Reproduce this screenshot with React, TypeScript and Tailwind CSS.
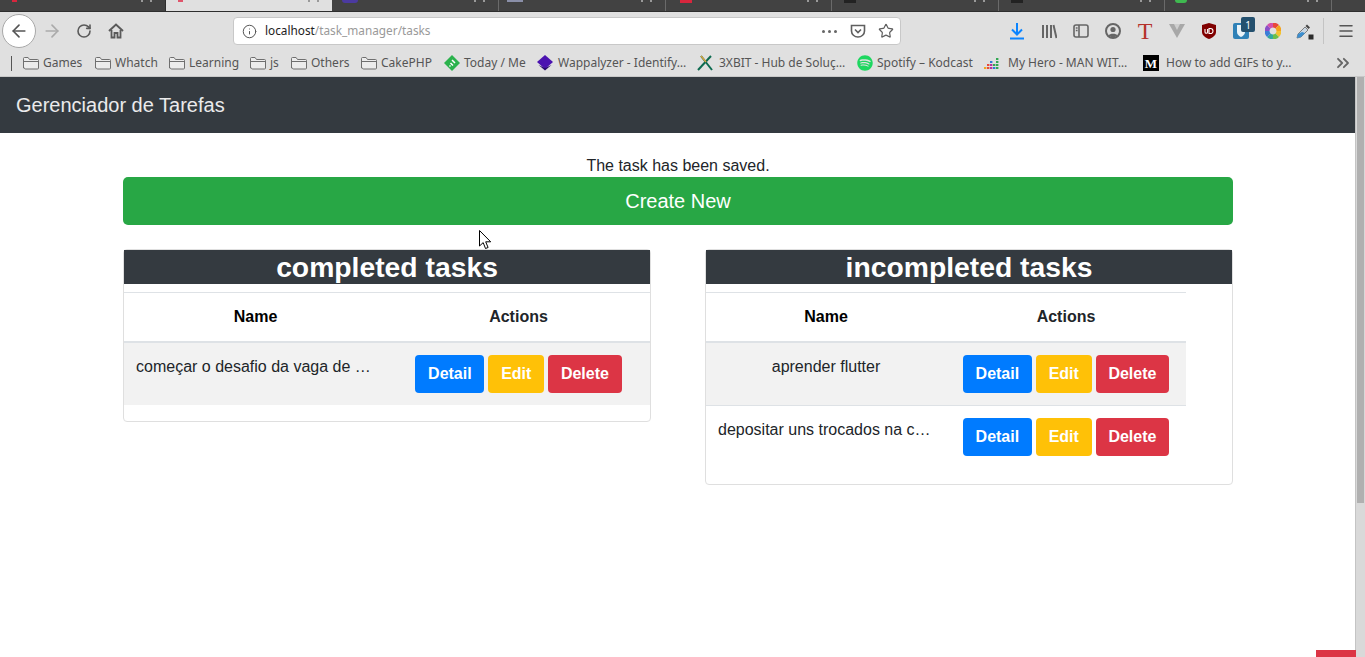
import { ArrowLeft, ArrowRight, ChevronsRight, Info, Menu, RotateCw, Star } from 'lucide-react'
import { FaSpotify } from 'react-icons/fa'

type Task = { name: string; center?: boolean }

function FolderIcon() {
  return (
    <svg width="16" height="16" viewBox="0 0 16 16" fill="none" stroke="#6f6f6f" strokeWidth="1">
      <path d="M.5 13V3.500a1 1 0 0 1 1-1h3.600l1.400 2h8a1 1 0 0 1 1 1V13a1 1 0 0 1-1 1h-12a1 1 0 0 1-1-1z" fill="#ececec" />
      <path d="M.5 6.500h15" />
    </svg>
  )
}

function HomeIcon() {
  return (
    <svg width="16" height="16" viewBox="0 0 16 16" fill="none" stroke="#5a5a5a" strokeWidth="2">
      <path d="M1 8l7-6.500L15 8" />
      <path d="M3.500 7v7.500h3V10h3v4.500h3V7" strokeWidth="1.800" />
    </svg>
  )
}

function Feedly() {
  return (
    <svg width="16" height="16" viewBox="0 0 16 16">
      <path d="M8 0l8 8-8 8-8-8z" fill="#2bb24c" />
      <path d="M8 5l3 3M6.500 8l2.500 2.500M5.500 10.500l1 1" stroke="#fff" strokeWidth="1.500" />
    </svg>
  )
}

function Wappalyzer() {
  return (
    <svg width="16" height="16" viewBox="0 0 16 16">
      <path d="M8 0l8 7-8 7-8-7z" fill="#4b13b0" />
      <path d="M1.500 10L8 15.500l6.500-5.500L8 13z" fill="#2a0a70" />
    </svg>
  )
}

function Xbit() {
  return (
    <svg width="16" height="16" viewBox="0 0 16 16" fill="none" strokeWidth="2">
      <path d="M1 15L14 1" stroke="#0d6b50" />
      <path d="M4 1l11 14" stroke="#0d6b50" />
      <path d="M4 1l5 6" stroke="#d9a441" strokeWidth="1.500" />
    </svg>
  )
}

function Deezer() {
  const bars = [
    [0, 12, '#f4a21c'], [3, 12, '#e8483a'], [3, 9, '#e8483a'], [6, 12, '#b7339b'], [6, 9, '#b7339b'], [6, 6, '#2d7dd2'],
    [9, 12, '#2d7dd2'], [9, 9, '#32a852'], [12, 12, '#32a852'], [12, 9, '#32a852'], [12, 6, '#32a852'], [12, 3, '#32a852'],
  ] as const
  return (
    <svg width="16" height="16" viewBox="0 0 16 16">
      {bars.map(([x, y, c], i) => (
        <rect key={i} x={x + 1} y={y} width="2.400" height="2" fill={c} />
      ))}
    </svg>
  )
}

function Medium() {
  return (
    <span className="flex h-4 w-4 items-center justify-center bg-black font-['Liberation_Serif',serif] text-[13px] font-bold leading-none text-white">
      M
    </span>
  )
}

const bookmarks = [
  { label: 'Games', icon: <FolderIcon />, w: 'w-[72px] gap-1' },
  { label: 'Whatch', icon: <FolderIcon />, w: 'w-[74px] gap-1' },
  { label: 'Learning', icon: <FolderIcon />, w: 'w-[81px] gap-1' },
  { label: 'js', icon: <FolderIcon />, w: 'w-[41px] gap-1' },
  { label: 'Others', icon: <FolderIcon />, w: 'w-[70px] gap-1' },
  { label: 'CakePHP', icon: <FolderIcon />, w: 'w-[83px] gap-1' },
  { label: 'Today / Me', icon: <Feedly />, w: 'w-[93px] gap-1' },
  { label: 'Wappalyzer - Identify…', icon: <Wappalyzer />, w: 'w-[160px] gap-[5px]' },
  { label: '3XBIT - Hub de Soluç…', icon: <Xbit />, w: 'w-[160px] gap-[6px]' },
  { label: 'Spotify – Kodcast', icon: <FaSpotify className="h-4 w-4 text-[#1ed760]" />, w: 'w-[126px] gap-1' },
  { label: 'My Hero - MAN WIT…', icon: <Deezer />, w: 'w-[160px] gap-[9px]' },
  { label: 'How to add GIFs to y…', icon: <Medium />, w: 'w-[190px] gap-[7px]' },
]

const tabs = [
  { w: 'w-[166px] border-r border-[#2e2e2e]', pad: 'pl-3', mark: 'h-[2px] w-[5px] bg-[#d7263d]' },
  { w: 'w-[166px] bg-[#e0e0e0]', pad: 'pl-3', mark: 'h-[2px] w-[5px] bg-[#e0556b]' },
  { w: 'w-[167px] border-r border-[#6a6a6a]', pad: 'pl-[10px]', mark: 'h-[3px] w-4 rounded-b-full bg-[#4b3aa0]' },
  { w: 'w-[167px] border-r border-[#6a6a6a]', pad: 'pl-2', mark: 'h-[2px] w-4 bg-[#8a8fa8]' },
  { w: 'w-[166px] border-r border-[#6a6a6a]', pad: 'pl-[14px]', mark: 'h-[3px] w-3 bg-[#d7263d]' },
  { w: 'w-[167px] border-r border-[#6a6a6a]', pad: 'pl-3', mark: 'h-[3px] w-3 bg-[#222]' },
  { w: 'w-[166px] border-r border-[#6a6a6a]', pad: 'pl-3', mark: 'h-[3px] w-3 bg-[#222]' },
  { w: 'w-[167px] border-r border-[#6a6a6a]', pad: 'pl-[10px]', mark: 'h-[3px] w-3 rounded-b-full bg-[#3fb950]' },
]

function TabStrip() {
  return (
    <div className="flex h-3 overflow-hidden border-b border-[#2e2e2e] bg-[#424242]">
      {tabs.map((t, i) => (
        <div key={i} className={`flex h-3 items-start justify-between pr-[13px] ${t.w} ${t.pad}`}>
          <div className={t.mark} />
          <div className="flex gap-[7px]">
            <div className="h-[2px] w-[2px] bg-[#9a9a9a]" />
            <div className="h-[2px] w-[2px] bg-[#9a9a9a]" />
          </div>
        </div>
      ))}
      <div className="flex-1" />
    </div>
  )
}

function ToolbarIcons() {
  return (
    <div className="ml-[100px] flex items-center">
      <span className="flex w-8 justify-center">
        <svg width="18" height="18" viewBox="0 0 18 18" fill="none" stroke="#0a84ff" strokeWidth="2">
          <path d="M9 1v11M4 7.500L9 12.500l5-5M2 16.500h14" />
        </svg>
      </span>
      <span className="flex w-8 justify-center">
        <svg width="16" height="16" viewBox="0 0 16 16" fill="none" stroke="#666" strokeWidth="2">
          <path d="M2 2v13M6 2v13M10 2v13M12.500 2l3 13" />
        </svg>
      </span>
      <span className="flex w-8 justify-center">
        <svg width="16" height="16" viewBox="0 0 16 16" fill="none" stroke="#666" strokeWidth="1.600">
          <rect x="1" y="2" width="14" height="12" rx="2" />
          <path d="M6 2v12" />
          <path d="M2.800 5h1.800M2.800 7.500h1.800" />
        </svg>
      </span>
      <span className="flex w-8 justify-center">
        <svg width="16" height="16" viewBox="0 0 16 16">
          <circle cx="8" cy="8" r="7" fill="none" stroke="#666" strokeWidth="2" />
          <circle cx="8" cy="6.500" r="2.600" fill="#666" />
          <path d="M3.500 12.500c1-2.500 8-2.500 9 0L8 15z" fill="#666" />
        </svg>
      </span>
      <span className="flex w-8 justify-center font-['Liberation_Serif',serif] text-[24px] leading-none text-[#b5322a]">T</span>
      <span className="flex w-8 justify-center">
        <svg width="16" height="16" viewBox="0 0 16 16">
          <path d="M0 1h16L8 15z" fill="#a8a8a8" />
          <path d="M5 1h6L8 7z" fill="#cfcfcf" />
        </svg>
      </span>
      <span className="flex w-8 justify-center">
        <svg width="16" height="16" viewBox="0 0 16 16">
          <path d="M8 0l7 2v7c0 3-3 5.500-7 7-4-1.500-7-4-7-7V2z" fill="#800000" />
          <path d="M4 6v3a1.300 1.300 0 0 0 2.600 0V6M8 5.500v5h1.500a2.500 2.500 0 0 0 0-5z" fill="none" stroke="#fff" strokeWidth="1.100" />
        </svg>
      </span>
      <span className="relative flex w-8 justify-center">
        <svg width="16" height="16" viewBox="0 0 16 16">
          <rect width="16" height="16" rx="2" fill="#2f81b7" />
          <path d="M4 2h8v7c0 2.500-2 4-4 5-2-1-4-2.500-4-5z" fill="#eaf3f8" />
        </svg>
        <span className="absolute -top-[6px] left-[16px] flex h-[15px] w-[14px] items-center justify-center rounded-[2px] bg-[#24506e] text-[10px] leading-none text-white">1</span>
      </span>
      <span className="flex w-8 justify-center">
        <svg width="16" height="16" viewBox="0 0 16 16" fill="none" strokeWidth="5">
          <path d="M8 2a6 6 0 0 1 4.200 1.800" stroke="#e8483a" />
          <path d="M12.200 3.800A6 6 0 0 1 14 8" stroke="#f4a21c" />
          <path d="M14 8a6 6 0 0 1-1.800 4.200" stroke="#f2c230" />
          <path d="M12.200 12.200A6 6 0 0 1 8 14" stroke="#6cc04a" />
          <path d="M8 14a6 6 0 0 1-4.200-1.800" stroke="#32a8a0" />
          <path d="M3.800 12.200A6 6 0 0 1 2 8" stroke="#3b7dd8" />
          <path d="M2 8a6 6 0 0 1 1.800-4.200" stroke="#8a4fc7" />
          <path d="M3.800 3.800A6 6 0 0 1 8 2" stroke="#d44fa8" />
        </svg>
      </span>
      <span className="flex w-8 justify-center">
        <svg width="18" height="18" viewBox="0 0 18 18">
          <path d="M11 2.500l3 3-1.500 1.500-3-3z" fill="#444" />
          <path d="M9 5L2 12l-1 4 4-1 7-7z" fill="#c9d6e2" stroke="#666" strokeWidth="0.800" />
          <path d="M2 12l4-2 3 1-4 4-4 1z" fill="#3a8ed0" />
          <rect x="12.500" y="12.500" width="5" height="5" fill="#2b2b2b" />
        </svg>
      </span>
      <span className="ml-[2px] h-[26px] w-px bg-[#c4c4c4]" />
      <span className="ml-[6px] flex w-8 justify-center">
        <Menu size={18} color="#555" strokeWidth={2} />
      </span>
    </div>
  )
}

function BrowserChrome() {
  return (
    <div className="font-['Noto_Sans',sans-serif] bg-[#e0e0e0]">
      <TabStrip />
      <div className="flex h-[38px] items-center pl-[2px]">
        <span className="flex h-[34px] w-[34px] items-center justify-center rounded-full border border-[#a8a8a8] bg-white">
          <ArrowLeft size={20} color="#555" strokeWidth={2} />
        </span>
        <span className="flex w-8 justify-center"><ArrowRight size={20} color="#aaa" strokeWidth={2} /></span>
        <span className="flex w-8 justify-center"><RotateCw size={16} color="#5a5a5a" strokeWidth={2.400} /></span>
        <span className="flex w-8 justify-center"><HomeIcon /></span>
        <div className="ml-[101px] flex h-[28px] w-[668px] items-center rounded-[4px] border border-[#c8c8c8] bg-white pl-2 pr-[6px]">
          <Info size={15} color="#555" strokeWidth={1.600} />
          <span className="ml-2 text-[11.8px] text-[#222]">localhost<span className="text-[#999]">/task_manager/tasks</span></span>
          <span className="ml-auto flex gap-[3px]">
            <span className="h-[3px] w-[3px] rounded-full bg-[#666]" />
            <span className="h-[3px] w-[3px] rounded-full bg-[#666]" />
            <span className="h-[3px] w-[3px] rounded-full bg-[#666]" />
          </span>
          <svg className="ml-[13px]" width="16" height="16" viewBox="0 0 16 16" fill="none" stroke="#5f5f5f" strokeWidth="1.600">
            <path d="M1.500 2.500h13V8a6.500 6 0 0 1-13 0z" />
            <path d="M5 6.500l3 3 3-3" />
          </svg>
          <Star className="ml-[12px]" size={16} color="#5f5f5f" strokeWidth={1.800} />
        </div>
        <ToolbarIcons />
      </div>
      <div className="flex h-[27px] items-center border-b border-[#c8c8c8] text-[12px] text-[#555]">
        <span className="ml-[11px] mr-[11px] h-[15px] w-px bg-[#555]" />
        {bookmarks.map((b) => (
          <span key={b.label} className={`flex shrink-0 items-center whitespace-nowrap ${b.w}`}>
            {b.icon}
            {b.label}
          </span>
        ))}
        <span className="flex"><ChevronsRight size={20} color="#666" strokeWidth={2.200} /></span>
      </div>
    </div>
  )
}

function ActionButtons() {
  return (
    <div className="flex justify-center gap-1">
      <button className="h-[38px] rounded-[4px] bg-[#007bff] px-[12.750px] font-bold text-white">Detail</button>
      <button className="h-[38px] rounded-[4px] bg-[#ffc107] px-[12.750px] font-bold text-white">Edit</button>
      <button className="h-[38px] rounded-[4px] bg-[#dc3545] px-[12.750px] font-bold text-white">Delete</button>
    </div>
  )
}

function TaskCard({ title, tasks, tableWidth }: { title: string; tasks: Task[]; tableWidth: string }) {
  return (
    <div className="w-[528px] self-start rounded-[4px] border border-[#dfdfdf] pb-4">
      <h2 className="h-[34px] bg-[#343a40] text-center text-[28.300px] leading-[34px] font-bold text-white">{title}</h2>
      <table className={`mt-2 table-fixed ${tableWidth}`}>
        <thead>
          <tr>
            <th className="w-1/2 border-t border-b-2 border-[#dee2e6] p-3 text-center text-black">Name</th>
            <th className="w-1/2 border-t border-b-2 border-[#dee2e6] p-3 text-center">Actions</th>
          </tr>
        </thead>
        <tbody>
          {tasks.map((t, i) => (
            <tr key={t.name} className={i % 2 === 0 ? 'bg-[#f2f2f2]' : ''}>
              <td className={`whitespace-nowrap border-t border-[#dee2e6] p-3 align-top ${t.center ? 'text-center' : ''}`}>{t.name}</td>
              <td className="border-t border-[#dee2e6] p-3 align-top"><ActionButtons /></td>
            </tr>
          ))}
        </tbody>
      </table>
    </div>
  )
}

export default function App() {
  return (
    <div className="relative flex h-[657px] flex-col overflow-hidden bg-white font-['Liberation_Sans',Arial,sans-serif] text-[16px] text-[#212529]">
      <BrowserChrome />
      <div className="flex flex-1">
        <main className="flex-1">
          <nav className="flex h-14 items-center bg-[#343a40] px-4 text-[20px] text-white/90">Gerenciador de Tarefas</nav>
          <div className="ml-[123px] w-[1110px]">
            <p className="mt-5 h-6 text-center leading-[26px]">The task has been saved.</p>
            <button className="block h-12 w-full rounded-[5px] bg-[#28a745] text-[20px] text-white">Create New</button>
            <div className="mt-6 flex justify-between">
              <TaskCard
                title="completed tasks"
                tableWidth="w-full"
                tasks={[{ name: 'começar o desafio da vaga de …' }]}
              />
              <TaskCard
                title="incompleted tasks"
                tableWidth="w-[480px]"
                tasks={[{ name: 'aprender flutter', center: true }, { name: 'depositar uns trocados na c…' }]}
              />
            </div>
          </div>
        </main>
        <aside className="w-[10px] border-l border-[#c4c4c4] bg-[#d9d9d9]">
          <div className="ml-px h-[426px] w-[7px] bg-[#b0b0b0]" />
        </aside>
      </div>
      <div className="absolute bottom-0 right-[9px] h-[7px] w-10 bg-[#dc3545]" />
      <svg className="absolute left-[479px] top-[230px]" width="13" height="20" viewBox="0 0 13 20">
        <path d="M.5.500v15.500l3.700-3.400 2.300 5.900 2.600-1-2.400-5.700h5z" fill="#fff" stroke="#000" strokeWidth="1" />
      </svg>
    </div>
  )
}
